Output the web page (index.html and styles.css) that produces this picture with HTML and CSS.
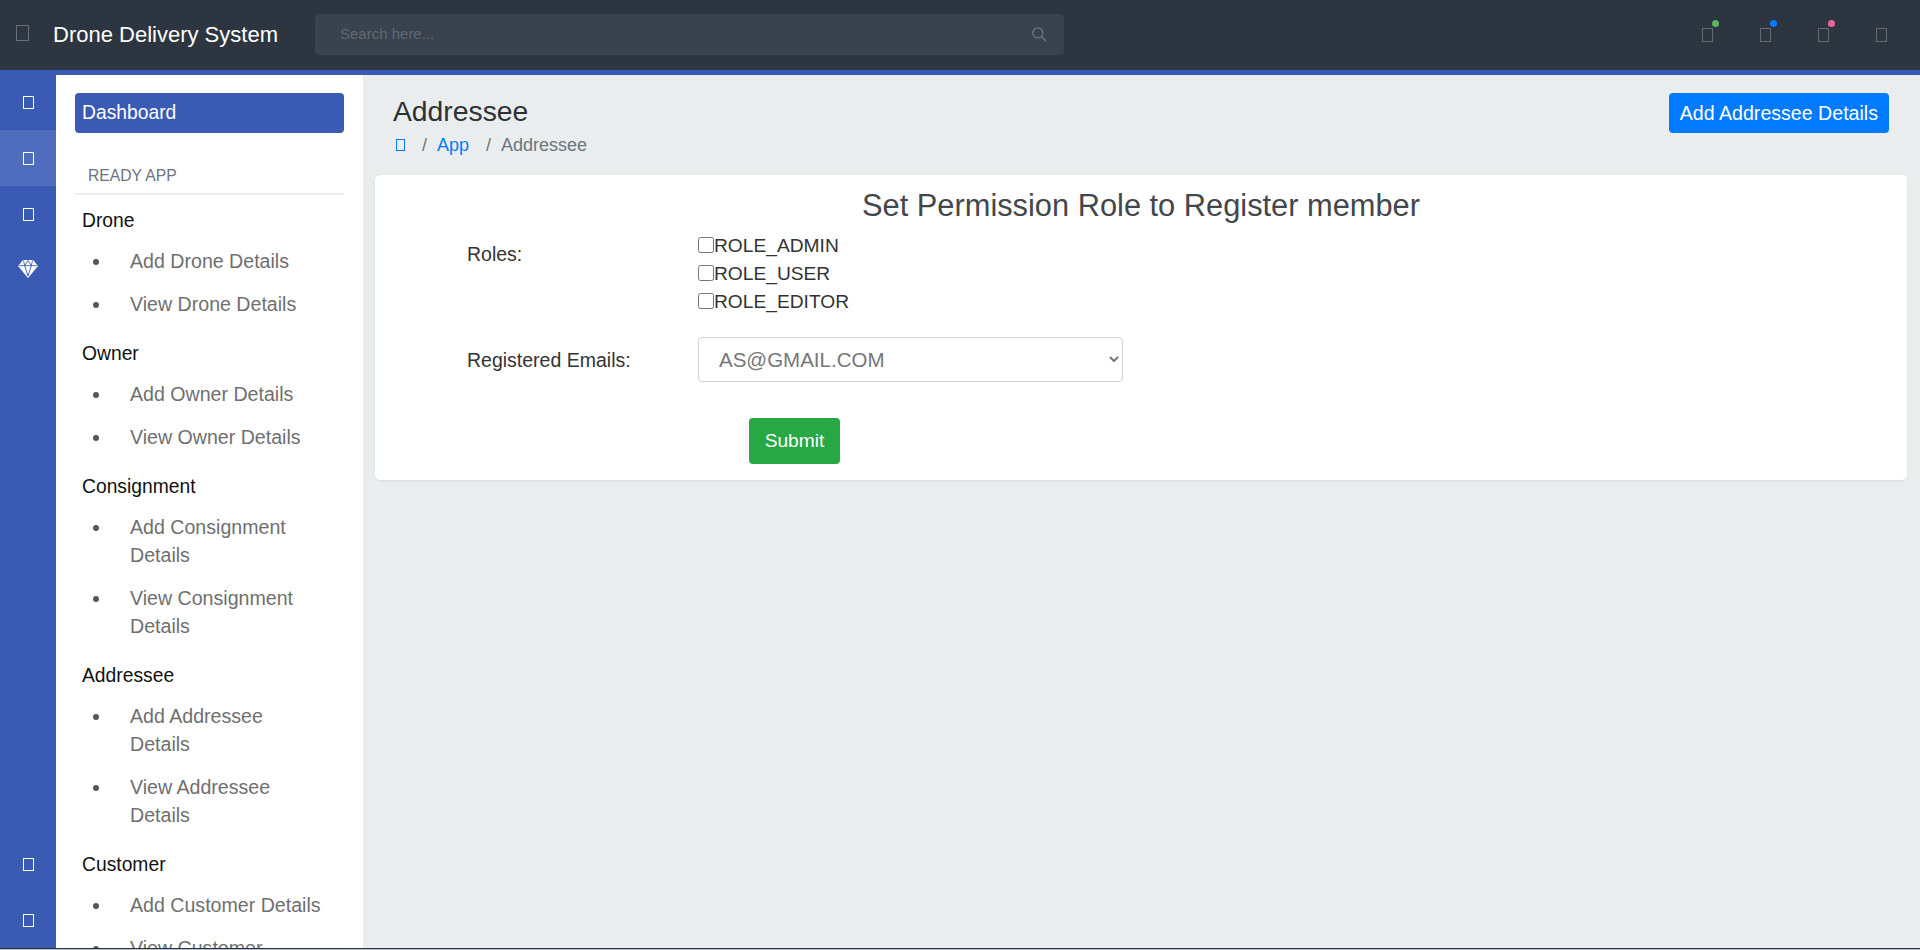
FILE: index.html
```html
<!DOCTYPE html>
<html lang="en">
<head>
<meta charset="utf-8">
<title>Drone Delivery System</title>
<link rel="stylesheet" href="styles.css">
</head>
<body>
<div class="app">
  <header class="topbar">
    <span class="tofu tofu-brand"></span>
    <span class="brand">Drone Delivery System</span>
    <div class="search">
      <span class="search-text">Search here...</span>
      <svg class="search-icon" viewBox="0 0 16 16" width="16" height="16"><circle cx="6.8" cy="6.8" r="5" fill="none" stroke="#6d7680" stroke-width="1.2"/><path d="M10.500 10.500L15 15" stroke="#6d7680" stroke-width="1.4" fill="none"/></svg>
    </div>
    <nav class="top-icons">
      <span class="top-icon"><span class="tofu tofu-top"></span><span class="dot dot-green"></span></span>
      <span class="top-icon"><span class="tofu tofu-top"></span><span class="dot dot-blue"></span></span>
      <span class="top-icon"><span class="tofu tofu-top"></span><span class="dot dot-pink"></span></span>
      <span class="top-icon"><span class="tofu tofu-top"></span></span>
    </nav>
  </header>
  <div class="body-row">
    <aside class="rail">
      <div class="rail-item"><span class="tofu tofu-rail"></span></div>
      <div class="rail-item rail-active"><span class="tofu tofu-rail"></span></div>
      <div class="rail-item"><span class="tofu tofu-rail"></span></div>
      <div class="rail-item">
        <svg class="gem" viewBox="0 0 20 20" width="20" height="20"><path fill="#fff" d="M5 1h10l5 6-10 12L0 7z"/><path fill="none" stroke="#3a5ab4" stroke-width="0.9" d="M1 6.700h18M5.500 1.500L6.700 6.700 10 17M14.500 1.500L13.300 6.700 10 17M6.700 6.700L10 1.500 13.300 6.700"/></svg>
      </div>
      <div class="rail-spacer"></div>
      <div class="rail-item"><span class="tofu tofu-rail"></span></div>
      <div class="rail-item"><span class="tofu tofu-rail"></span></div>
    </aside>
    <aside class="sidebar">
      <a class="dash">Dashboard</a>
      <div class="section-label">READY APP</div>
      <section class="group">
        <h4 class="group-title">Drone</h4>
        <ul class="group-list"><li>Add Drone Details</li><li>View Drone Details</li></ul>
      </section>
      <section class="group">
        <h4 class="group-title">Owner</h4>
        <ul class="group-list"><li>Add Owner Details</li><li>View Owner Details</li></ul>
      </section>
      <section class="group">
        <h4 class="group-title">Consignment</h4>
        <ul class="group-list"><li>Add Consignment Details</li><li>View Consignment Details</li></ul>
      </section>
      <section class="group">
        <h4 class="group-title">Addressee</h4>
        <ul class="group-list"><li>Add Addressee Details</li><li>View Addressee Details</li></ul>
      </section>
      <section class="group">
        <h4 class="group-title">Customer</h4>
        <ul class="group-list"><li>Add Customer Details</li><li>View Customer Details</li></ul>
      </section>
    </aside>
    <main class="main">
      <div class="page-head">
        <div>
          <h1 class="page-title">Addressee</h1>
          <div class="crumbs">
            <span class="tofu tofu-crumb"></span>
            <span class="sep">/</span>
            <a class="crumb-link">App</a>
            <span class="sep">/</span>
            <span class="crumb-current">Addressee</span>
          </div>
        </div>
        <a class="btn-add">Add Addressee Details</a>
      </div>
      <section class="card">
        <h3 class="card-title">Set Permission Role to Register member</h3>
        <form class="form">
          <div class="row row-roles">
            <label class="label">Roles:</label>
            <div class="checks">
              <label class="check"><input type="checkbox">ROLE_ADMIN</label>
              <label class="check"><input type="checkbox">ROLE_USER</label>
              <label class="check"><input type="checkbox">ROLE_EDITOR</label>
            </div>
          </div>
          <div class="row row-email">
            <label class="label">Registered Emails:</label>
            <select class="select"><option>AS@GMAIL.COM</option></select>
          </div>
          <button type="button" class="btn-submit">Submit</button>
        </form>
      </section>
    </main>
  </div>
  <div class="edge"></div>
</div>
</body>
</html>
```
FILE: styles.css
```css
* { box-sizing: border-box; }
html, body { margin: 0; height: 100%; overflow: hidden; }
body { font-family: "Liberation Sans", Arial, sans-serif; font-size: 16px; line-height: 1.5; color: #333; background: #e9edee; }
.app { height: 950px; display: flex; flex-direction: column; }

.tofu { display: inline-block; border: 1px solid currentColor; }

.topbar { flex: 0 0 75px; display: flex; align-items: center; background: #2d3540; border-bottom: 5px solid #3a5ab4; padding-left: 16px; }
.tofu-brand { flex: 0 0 13px; height: 16px; margin-bottom: 4px; color: #6b7078; }
.brand { flex: 0 0 262px; margin-left: 24px; margin-bottom: 2px; font-size: 22px; color: #fff; white-space: nowrap; }
.search { width: 749px; height: 41px; background: #3a424e; border-radius: 4px; display: flex; align-items: center; justify-content: space-between; padding: 0 17px 0 25px; position: relative; top: -1px; }
.search-text { font-size: 15px; color: #5f6873; }
.top-icons { margin-left: auto; display: flex; gap: 47px; padding-right: 33px; }
.top-icon { position: relative; display: flex; width: 11px; height: 14px; }
.tofu-top { width: 11px; height: 14px; color: #666b72; }
.dot { position: absolute; top: -8px; left: 10px; width: 7px; height: 7px; border-radius: 50%; }
.dot-green { background: #5cb85c; }
.dot-blue { background: #007bff; }
.dot-pink { background: #f0609b; }

.body-row { flex: 1 1 auto; min-height: 0; display: flex; }
.rail { flex: 0 0 56px; background: #3a5ab4; display: flex; flex-direction: column; margin-top: -1px; }
.rail-item { flex: 0 0 56px; display: flex; align-items: center; justify-content: center; color: #fff; }
.rail-active { background: #4f6cbd; }
.rail-spacer { flex: 1 1 auto; }
.tofu-rail { width: 11px; height: 13px; color: #fff; }
.gem { margin-bottom: 2px; }

.sidebar { flex: 0 0 307px; background: #fff; padding: 18px 19px 0 19px; overflow: hidden; }
.dash { display: block; height: 40px; background: #3a5ab4; color: #fff; border-radius: 4px; padding: 6px 7px; font-size: 19.300px; line-height: 28px; }
.section-label { margin-top: 32px; padding: 0 13px 6px; border-bottom: 2px solid #eceeef; font-size: 15.700px; line-height: 22px; color: #6c757d; }
.group { margin-bottom: 2px; }
.group-title { margin: 0; padding: 12px 7px 5px; font-size: 19.300px; font-weight: 400; line-height: 28px; color: #111; }
.group-list { margin: 0; padding: 0 20px 0 37px; color: #6f6f6f; }
.group-list li { padding: 7px 0 8px 18px; line-height: 28px; font-size: 19.600px; }
.group-list li::marker { color: #555; }

.main { flex: 1 1 auto; min-width: 0; padding: 18px 13px 0 12px; }
.page-head { display: flex; justify-content: space-between; align-items: flex-start; padding: 0 18px 0 18px; height: 82px; }
.page-title { margin: 0; font-size: 28.300px; font-weight: 400; line-height: 36px; color: #2e3134; }
.crumbs { display: flex; align-items: center; font-size: 18px; line-height: 28px; color: #6c757d; margin-top: 2px; }
.tofu-crumb { width: 9px; height: 12px; color: #007bff; margin-left: 3px; }
.sep { margin: 0 10px 0 17px; }
.crumb-link { color: #007bff; }
.crumb-current { color: #6c757d; }
.btn-add { display: block; height: 40px; padding: 0 11px; background: #007bff; color: #fff; border-radius: 4px; font-size: 19.600px; line-height: 40px; white-space: nowrap; }

.card { height: 305px; background: #fff; border-radius: 5px; box-shadow: 0 1px 2px rgba(0,0,0,.08); padding-top: 14px; }
.card-title { margin: 0; text-align: center; font-size: 30.800px; font-weight: 400; line-height: 34px; color: #43474b; }
.form { padding-left: 92px; }
.row { display: flex; }
.label { flex: 0 0 231px; font-size: 19.500px; line-height: 28px; color: #333; }
.row-roles { margin-top: 9px; }
.row-roles .label { padding-top: 8px; }
.checks { display: flex; flex-direction: column; }
.check { display: flex; align-items: center; height: 28px; font-size: 19.200px; color: #333; }
.check input { margin: 0; width: 16px; height: 16px; position: relative; top: -1px; }
.row-email { margin-top: 21px; align-items: center; }
.select { width: 425px; height: 45px; padding: 0 16px; border: 1px solid #ced4da; border-radius: 4px; background: #fff; color: #777; font: 20.500px "Liberation Sans", Arial, sans-serif; }
.btn-submit { display: block; margin: 36px 0 0 282px; width: 91px; height: 46px; border: 0; border-radius: 4px; background: #28a745; color: #fff; font: 19.200px "Liberation Sans", Arial, sans-serif; }

.edge { flex: 0 0 2px; background: linear-gradient(#2a323d 50%, #b4bfd0 50%); }
```
